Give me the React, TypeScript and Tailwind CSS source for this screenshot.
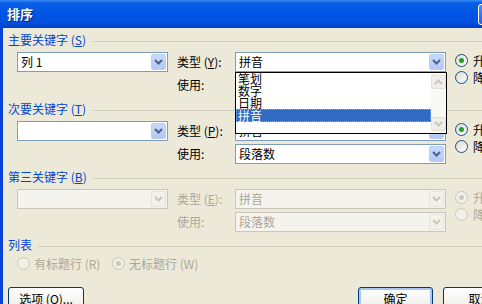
import type { ReactNode } from "react";

function Chevron({ up, disabled }: { up?: boolean; disabled?: boolean }) {
  return (
    <svg width="9" height="6" viewBox="0 0 9 6">
      <path
        d={up ? "M1 5 L4.5 1.5 L8 5" : "M1 1 L4.5 4.5 L8 1"}
        fill="none"
        stroke={disabled ? "#C9C7BA" : "#4D6185"}
        strokeWidth="2"
      />
    </svg>
  );
}

function DropButton({ disabled }: { disabled?: boolean }) {
  return (
    <div
      className={
        disabled
          ? "w-[15px] m-[1px] shrink-0 rounded-[2px] flex items-center justify-center bg-[#F2F1EA] border border-[#E6E4DA]"
          : "w-[15px] m-[1px] shrink-0 rounded-[2px] flex items-center justify-center bg-[linear-gradient(to_bottom,#C9D8FC,#B4C8F6)] border border-[#BCCDF4]"
      }
    >
      <Chevron disabled={disabled} />
    </div>
  );
}

function Combo({
  text,
  width,
  disabled,
  children,
}: {
  text?: string;
  width: string;
  disabled?: boolean;
  children?: ReactNode;
}) {
  return (
    <div
      className={`relative flex h-[20px] shrink-0 border ${width} ${
        disabled ? "border-[#C9C7BA] bg-[#F4F3EE] text-[#ACA899]" : "border-[#7F9DB9] bg-white text-black"
      }`}
    >
      <div className="flex-1 pl-[3px] text-[12px] leading-[18px] whitespace-nowrap">{text}</div>
      <DropButton disabled={disabled} />
      {children}
    </div>
  );
}

function Radio({ checked, disabled }: { checked?: boolean; disabled?: boolean }) {
  return (
    <span
      className={`w-[13px] h-[13px] shrink-0 rounded-full border flex items-center justify-center ${
        disabled
          ? "border-[#CAC8BB] bg-[#F0EFE8]"
          : "border-[#1C5180] bg-[linear-gradient(135deg,#DCD9CF,#FFFFFF)]"
      }`}
    >
      {checked && (
        <span
          className={`w-[5px] h-[5px] rounded-full ${disabled ? "bg-[#CAC8BB]" : "bg-[#21A121]"}`}
        />
      )}
    </span>
  );
}

function Header({ title, hot }: { title: string; hot?: string }) {
  return (
    <div className="flex items-center h-[13px] pl-[5px]">
      <span className="text-[12px] leading-[13px] text-[#0046D5] whitespace-nowrap">
        {title}
        {hot && (
          <>
            {" "}(<u>{hot}</u>)
          </>
        )}
      </span>
      <span className="flex-1 h-px bg-[#D0D0BF] ml-[6px] mt-[3px]" />
    </div>
  );
}

const items = ["笔划", "数字", "日期", "拼音"];

function DropList() {
  return (
    <div className="absolute left-[-1px] top-[19px] z-10 flex w-[212px] h-[62px] border border-black bg-white">
      <div className="flex-1 flex flex-col">
        {items.map((it) => (
          <div
            key={it}
            className={
              it === "拼音"
                ? "h-[13px] leading-[11px] text-[12px] pl-[1px] bg-[#316AC5] text-white border border-dotted border-[#E8A33D]"
                : "h-[12px] leading-[12px] text-[12px] pl-[2px] text-black"
            }
          >
            {it}
          </div>
        ))}
      </div>
      <div className="w-[15px] bg-[#F9F8F3] flex flex-col justify-between py-[2px]">
        <div className="h-[14px] rounded-[2px] bg-[#EFEEE8] border border-[#E2E0D6] flex items-center justify-center">
          <Chevron up disabled />
        </div>
        <div className="h-[14px] rounded-[2px] bg-[#EFEEE8] border border-[#E2E0D6] flex items-center justify-center">
          <Chevron disabled />
        </div>
      </div>
    </div>
  );
}

function KeySection({
  title,
  hot,
  typeHot,
  leftText,
  disabled,
  open,
  mt,
}: {
  title: string;
  hot: string;
  typeHot: string;
  leftText?: string;
  disabled?: boolean;
  open?: boolean;
  mt: string;
}) {
  const label = disabled ? "text-[#ACA899]" : "text-black";
  return (
    <div className={mt}>
      <Header title={title} hot={hot} />
      <div className="flex mt-[6px] pl-[14px]">
        <Combo text={leftText} width="w-[151px]" disabled={disabled} />
        <div className="flex flex-col gap-[3px] ml-[9px]">
          <div className="flex items-center h-[20px]">
            <span className={`w-[58px] text-[12px] whitespace-nowrap ${label}`}>
              类型 (<u>{typeHot}</u>):
            </span>
            <Combo text="拼音" width="w-[211px]" disabled={disabled}>
              {open && <DropList />}
            </Combo>
          </div>
          <div className="flex items-center h-[20px]">
            <span className={`w-[58px] text-[12px] whitespace-nowrap ${label}`}>使用:</span>
            <Combo text="段落数" width="w-[211px]" disabled={disabled} />
          </div>
        </div>
        <div className="flex flex-col gap-[4px] ml-[9px] pt-[2px]">
          <div className="flex items-center gap-[5px] whitespace-nowrap">
            <Radio checked disabled={disabled} />
            <span className={`text-[12px] leading-[13px] ${label}`}>升序(A)</span>
          </div>
          <div className="flex items-center gap-[5px] whitespace-nowrap">
            <Radio disabled={disabled} />
            <span className={`text-[12px] leading-[13px] ${label}`}>降序(D)</span>
          </div>
        </div>
      </div>
    </div>
  );
}

export default function App() {
  return (
    <div className="w-[482px] h-[304px] overflow-hidden flex flex-col bg-[#ECE9D8] font-['Noto_Sans_CJK_SC',sans-serif] select-none">
      <div className="h-[28px] shrink-0 flex items-center bg-[linear-gradient(to_bottom,#3A8CF6_0%,#0A60E6_10%,#0055E5_45%,#0052E0_80%,#003EC0_100%)]">
        <span className="pl-[7px] text-[13px] font-bold text-white [text-shadow:1px_1px_0_#0A1E6E]">
          排序
        </span>
        <div className="flex-1" />
        <div className="w-[4px] h-[21px] overflow-hidden">
          <div className="w-[21px] h-[21px] rounded-[3px] border border-white bg-[linear-gradient(to_bottom,#4D8EF8,#2462E2)]" />
        </div>
      </div>
      <div className="flex-1 flex flex-col border-l-[3px] border-[#0843D9] pt-[5px]">
        <KeySection title="主要关键字" hot="S" typeHot="Y" leftText="列 1" open mt="mt-0" />
        <KeySection title="次要关键字" hot="T" typeHot="P" mt="mt-[7px]" />
        <KeySection title="第三关键字" hot="B" typeHot="E" disabled mt="mt-[6px]" />
        <div className="mt-[6px]">
          <Header title="列表" />
        </div>
        <div className="flex mt-[6px] pl-[14px] text-[12px] text-[#ACA899]">
          <div className="flex items-center gap-[4px] w-[95px] whitespace-nowrap">
            <Radio disabled />
            <span className="leading-[13px]">有标题行 (R)</span>
          </div>
          <div className="flex items-center gap-[4px] whitespace-nowrap">
            <Radio checked disabled />
            <span className="leading-[13px]">无标题行 (W)</span>
          </div>
        </div>
        <div className="flex mt-[17px] pl-[5px]">
          <button className="w-[76px] h-[23px] shrink-0 rounded-[3px] border border-[#003C74] bg-[linear-gradient(to_bottom,#FFFFFF,#F0EFEA_85%,#D6D0C5)] text-[12px] text-black">
            选项 (<u>O</u>)...
          </button>
          <div className="flex-1" />
          <button className="w-[75px] h-[23px] shrink-0 rounded-[3px] border border-[#003C74] bg-[linear-gradient(to_bottom,#FFFFFF,#F0EFEA_85%,#D6D0C5)] shadow-[inset_0_0_0_2px_#A8C6F0] text-[12px] text-black">
            确定
          </button>
          <button className="w-[75px] h-[23px] shrink-0 ml-[10px] mr-[-36px] rounded-[3px] border border-[#003C74] bg-[linear-gradient(to_bottom,#FFFFFF,#F0EFEA_85%,#D6D0C5)] text-[12px] text-black">
            取消
          </button>
        </div>
      </div>
    </div>
  );
}
